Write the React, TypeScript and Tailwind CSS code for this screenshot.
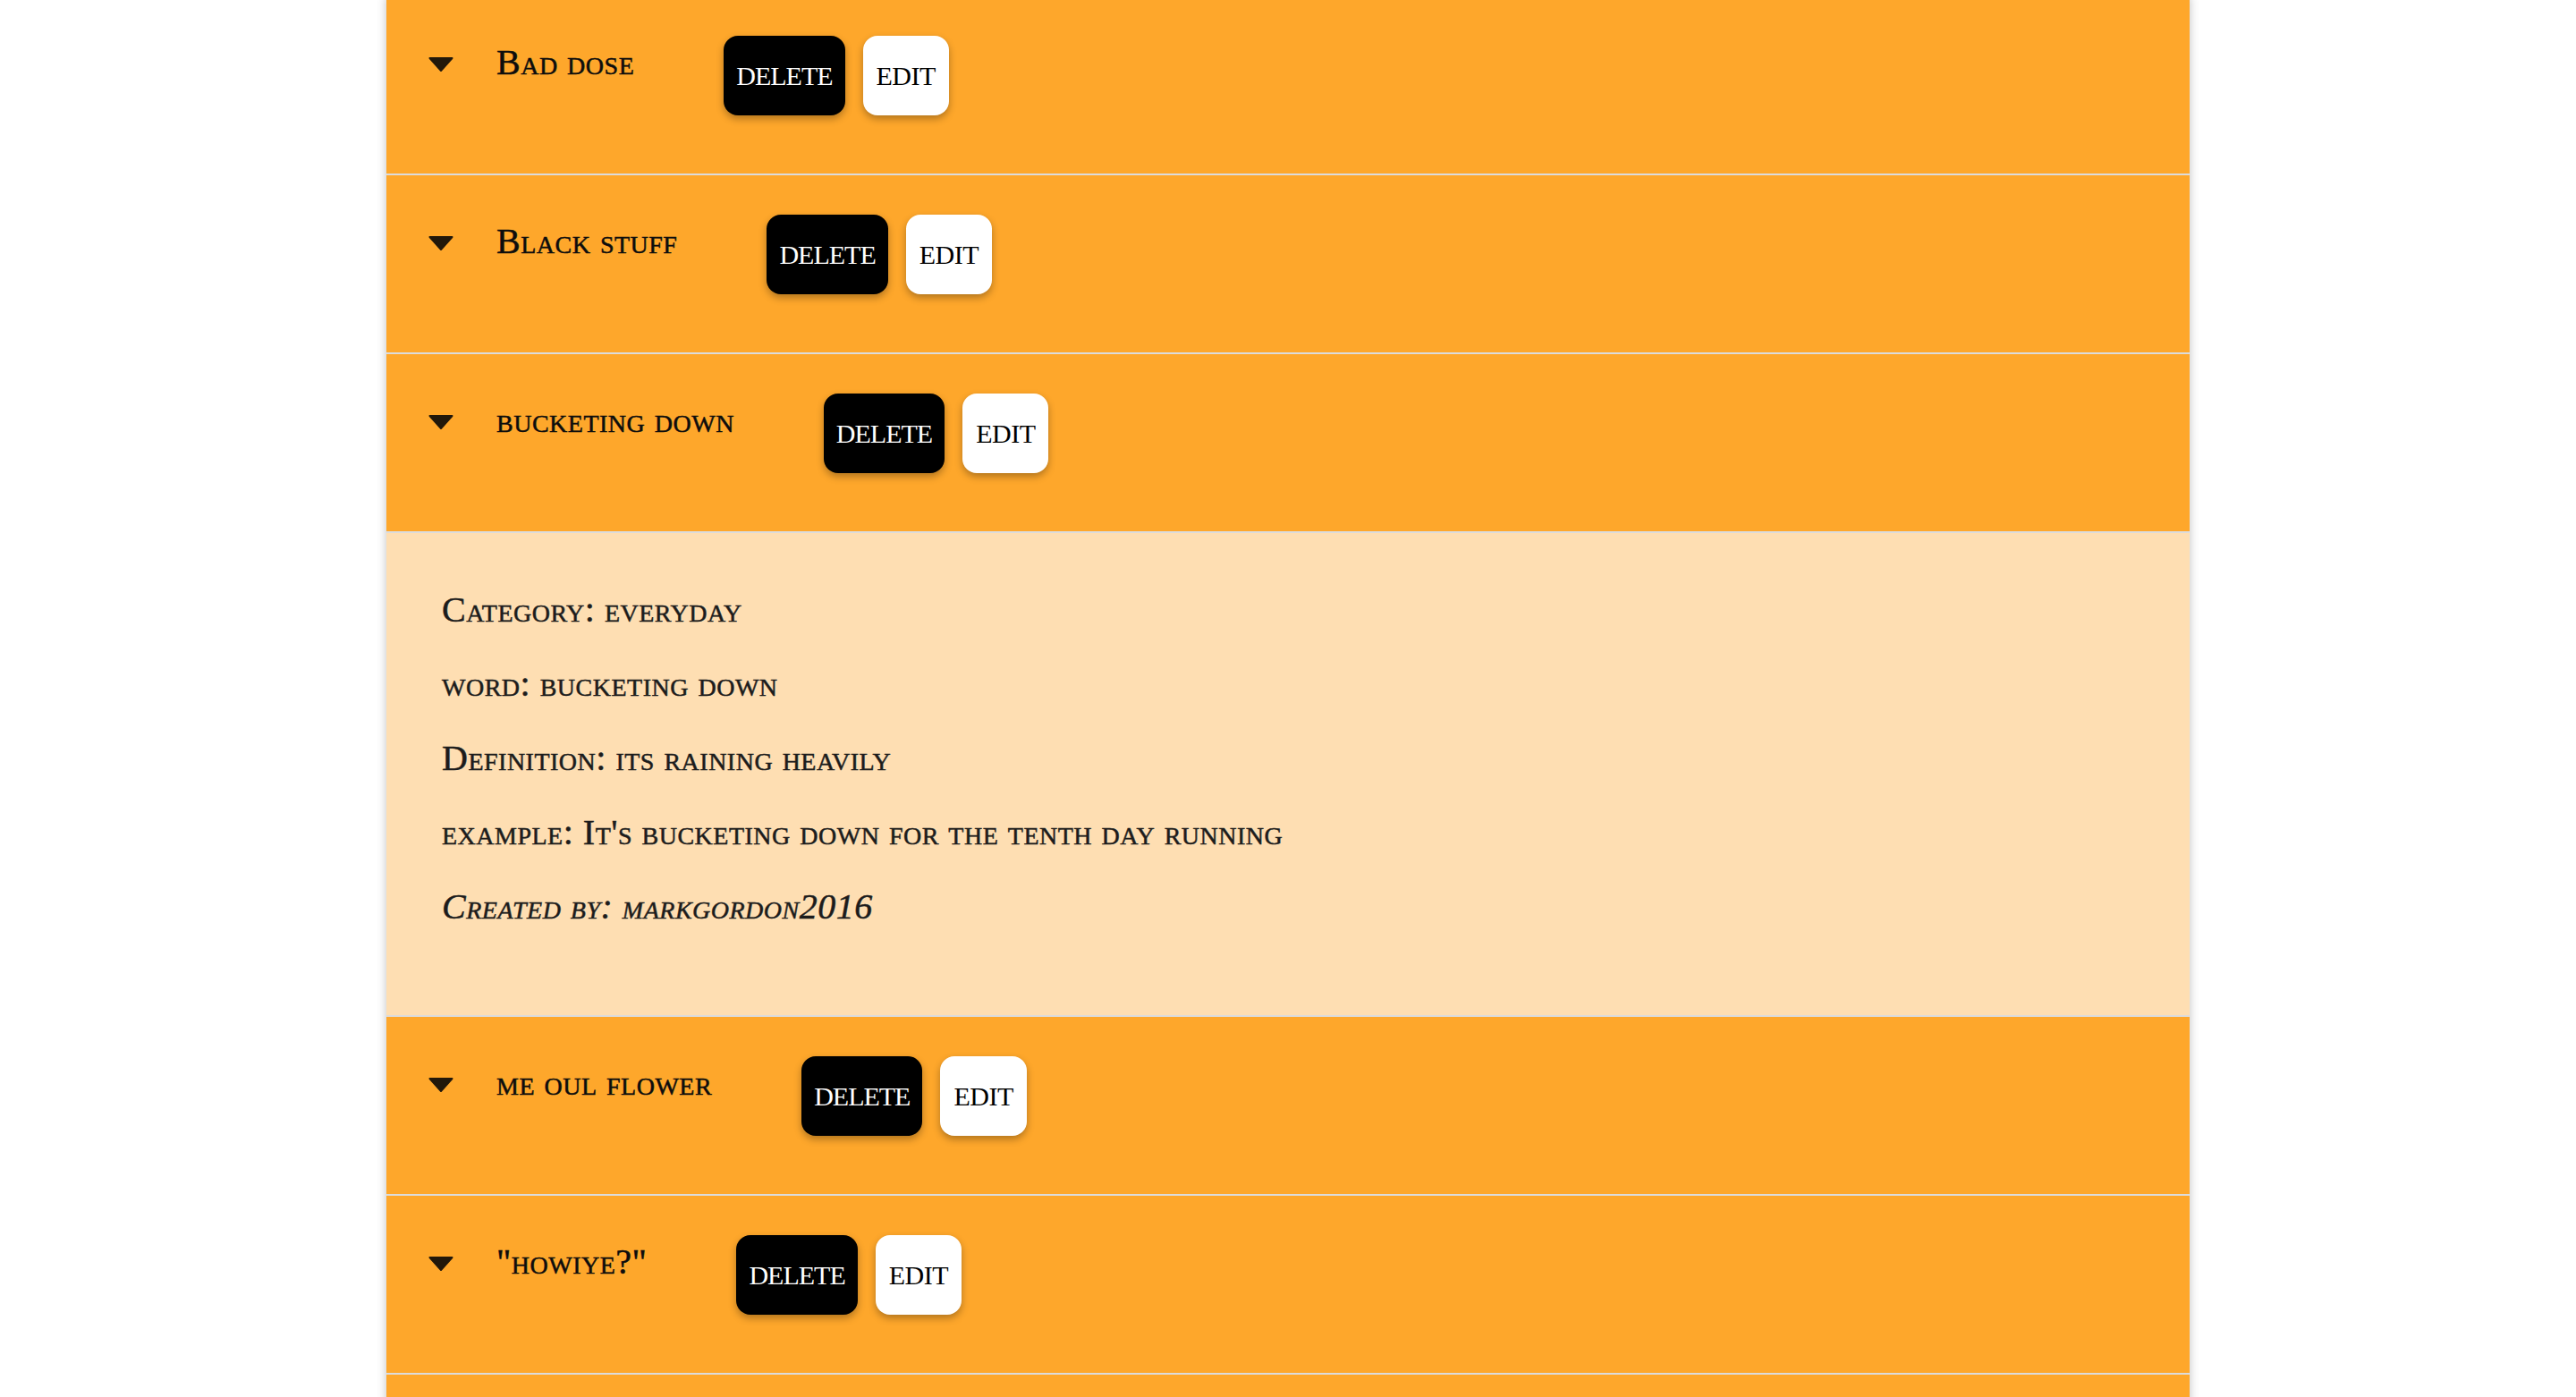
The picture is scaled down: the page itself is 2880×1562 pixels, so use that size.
const serif = { fontFamily: '"Liberation Serif", "Times New Roman", serif' };

type Entry = {
  title: string;
  open?: boolean;
  category?: string;
  definition?: string;
  example?: string;
  author?: string;
};

const entries: Entry[] = [
  { title: "Bad dose" },
  { title: "Black stuff" },
  {
    title: "bucketing down",
    open: true,
    category: "everyday",
    definition: "its raining heavily",
    example: "It's bucketing down for the tenth day running",
    author: "markgordon2016",
  },
  { title: "me oul flower" },
  { title: "\"howiye?\"" },
];

function Caret() {
  return (
    <svg width="28" height="16" viewBox="0 0 28 16" className="shrink-0 mt-[24px]">
      <path d="M1.5 1 L26.5 1 L14 15 Z" fill="#22180a" stroke="#22180a" strokeWidth="2" strokeLinejoin="round" />
    </svg>
  );
}

function Row({ entry }: { entry: Entry }) {
  return (
    <div>
      {/* Header */}
      <div className="h-[200px] bg-[#fea72b] border-b-2 border-[#dcdcdc] flex items-start pt-[44px] pl-[47px]">
        <Caret />
        <h3 className="ml-[48px] text-[40px] leading-[60px] tracking-[0.5px] text-[#0d0d0d] [font-variant:small-caps] [-webkit-text-stroke:0.5px_#0d0d0d] whitespace-nowrap">
          {entry.title}
        </h3>
        <div className="ml-[100px] flex gap-[20px]">
          <button className="h-[89px] px-[14px] rounded-[16px] bg-black text-white text-[30px] tracking-[-1px] shadow-[0_4px_8px_rgba(0,0,0,0.3)]">
            DELETE
          </button>
          <button className="h-[89px] px-[15px] rounded-[16px] bg-white text-black text-[30px] tracking-[-0.5px] shadow-[0_4px_8px_rgba(0,0,0,0.3)]">
            EDIT
          </button>
        </div>
      </div>

      {/* Details panel */}
      {entry.open && (
        <div className="bg-[#fedeb2] border-b-2 border-[#dcdcdc] pl-[62px] pt-[56px] pb-[91px] flex flex-col gap-[23px] text-[40px] leading-[60px] tracking-[0.5px] text-[#1c1c1c] [font-variant:small-caps] [-webkit-text-stroke:0.5px_#1c1c1c]">
          <p>Category: {entry.category}</p>
          <p>word: {entry.title}</p>
          <p>Definition: {entry.definition}</p>
          <p>example: {entry.example}</p>
          <p className="italic">Created by: {entry.author}</p>
        </div>
      )}
    </div>
  );
}

export default function App() {
  return (
    <div className="h-screen bg-white overflow-hidden" style={serif}>
      <div className="w-[70%] mx-auto -mt-[4px] shadow-[0_0_10px_rgba(0,0,0,0.25)]">
        {entries.map((e, i) => (
          <Row key={i} entry={e} />
        ))}
        {/* next row, scrolled below the fold */}
        <div className="h-[200px] bg-[#fea72b]" />
      </div>
    </div>
  );
}
